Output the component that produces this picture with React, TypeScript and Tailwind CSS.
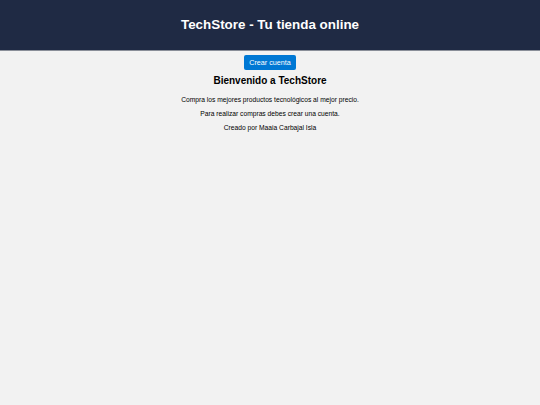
import React from 'react';

export default function App() {
  return (
    <div className="min-h-[405px] bg-[#f2f2f2] font-['Liberation_Sans',Arial,sans-serif] text-black">
      <header className="h-[51px] bg-[#1f2a44] border-b border-[#8a8f99] flex items-center justify-center">
        <h1 className="text-[13.4px] font-bold text-white leading-none">TechStore - Tu tienda online</h1>
      </header>

      <main className="flex flex-col items-center pt-[4px]">
        <button className="h-[15px] px-[5px] rounded-[2px] bg-[#0078d4] text-white text-[7.2px] leading-none">
          Crear cuenta
        </button>
        <h2 className="mt-[5px] text-[10px] leading-[12px] font-bold">Bienvenido a TechStore</h2>
        <p className="mt-[9px] text-[6.7px] leading-[8px]">Compra los mejores productos tecnológicos al mejor precio.</p>
        <p className="mt-[6px] text-[6.7px] leading-[8px]">Para realizar compras debes crear una cuenta.</p>
        <p className="mt-[5.5px] text-[6.7px] leading-[8px]">Creado por Maaia Carbajal Isla</p>
      </main>
    </div>
  );
}
